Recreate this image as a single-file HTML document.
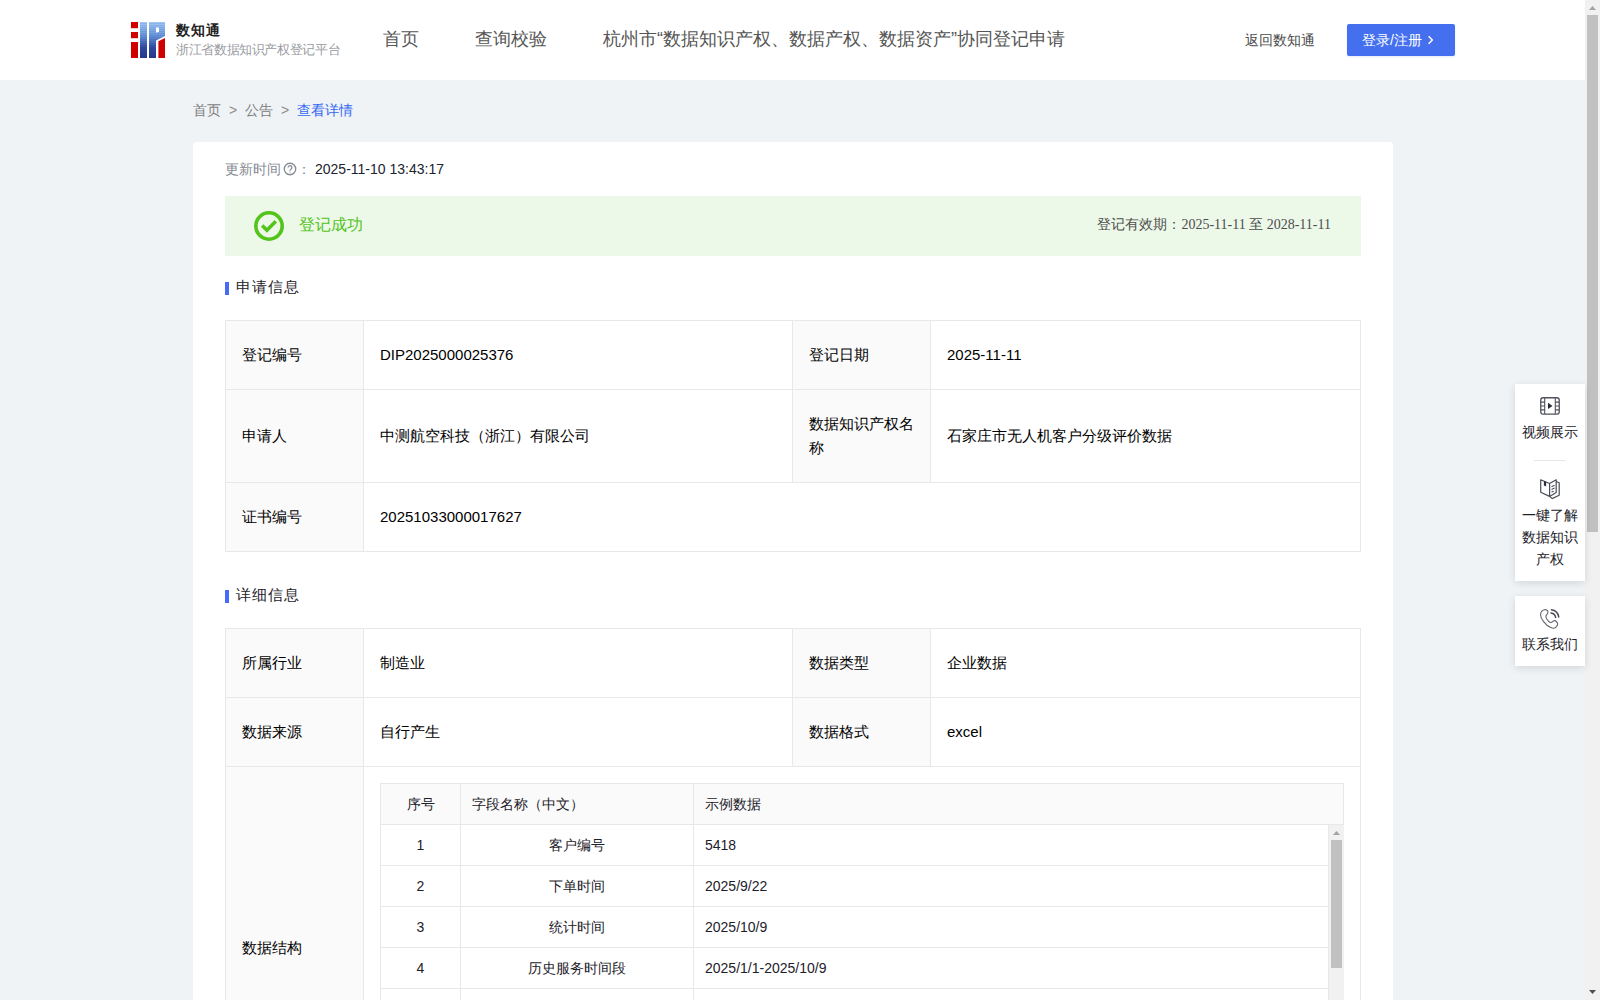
<!DOCTYPE html>
<html>
<head>
<meta charset="utf-8">
<title>数知通</title>
<style>
*{box-sizing:border-box;margin:0;padding:0}
html,body{width:1600px;height:1000px;overflow:hidden}
body{font-family:"Liberation Sans",sans-serif;font-size:14px;color:#222;background:#eff3f6;position:relative}
.serif{font-family:"Liberation Serif",serif}
#hdr{position:absolute;left:0;top:0;width:1585px;height:80px;background:#fff}
#logo{position:absolute;left:131px;top:22px;width:34px;height:36px}
#brand{position:absolute;left:176px;top:20px;font-size:14px;font-weight:bold;color:#222;line-height:20px;white-space:nowrap}
#brand2{position:absolute;left:176px;top:41px;font-size:12.6px;color:#999ba1;line-height:18px;white-space:nowrap}
.nav{position:absolute;top:26px;font-size:18px;line-height:26px;color:#555;white-space:nowrap}
#brand span{display:inline-block;width:15px}
#brand2 span{display:inline-block;width:12.65px}
#back{position:absolute;left:1245px;top:29px;font-size:14px;line-height:22px;color:#4a4a4a;white-space:nowrap}
#login{position:absolute;left:1347px;top:24px;width:108px;height:32px;background:#4470ef;border-radius:2px;box-shadow:0 1px 2px rgba(40,80,200,.12);color:#fff;font-size:14px;line-height:32px;white-space:nowrap;padding-left:15px}
#crumb{position:absolute;left:193px;top:99px;font-size:14px;line-height:22px;color:#808080;white-space:nowrap}
#crumb span{display:inline-block}
#crumb .sep{margin:0 8px;width:8px;color:#8c8c8c}
#crumb .cur{color:#3467f3}
#card{position:absolute;left:193px;top:142px;width:1200px;height:900px;background:#fff;border-radius:4px}
#upd{position:absolute;left:32px;top:16px;line-height:22px;color:#868a93;white-space:nowrap}
#upd .q{display:inline-block;width:14px;height:14px;vertical-align:-1.5px;margin:0 0 0 2px}
#upd b{margin-left:4px;font-weight:normal;color:#20232e}
#ok{position:absolute;left:32px;top:54px;width:1136px;height:60px;background:#ecf8e8}
#ok .ck{position:absolute;left:27px;top:13px;width:34px;height:34px}
#ok .t{position:absolute;left:74px;top:17px;font-size:16px;line-height:24px;color:#52c41a}
#ok .r{position:absolute;right:30px;top:18px;font-size:14px;line-height:22px;color:#4d4d4d;white-space:nowrap}
.sec{position:absolute;left:32px;font-size:15px;letter-spacing:1px;line-height:24px;color:#1d2129;white-space:nowrap;padding-left:11px}
.sec i{position:absolute;left:0;top:7px;width:4px;height:13px;background:#476bf6}
table{border-collapse:separate;border-spacing:0;table-layout:fixed}
.desc{position:absolute;left:32px;width:1136px;border:1px solid #e8e8e8}
.desc td{border:0 solid #e8e8e8;border-right-width:1px;border-bottom-width:1px;padding:22px 16px;line-height:24px;font-size:15px;color:#000;vertical-align:middle;text-align:left;background:#fff}
.desc td.l{background:#fafafa}
.desc td:last-child{border-right-width:0}
.desc tr:last-child>td{border-bottom-width:0}

.desc td.nest{padding:16px 16px 16px 16px;vertical-align:top}
.in{width:964px;border:1px solid #e8e8e8;border-collapse:separate;border-spacing:0;table-layout:fixed}
.in td,.in th{border:0 solid #e8e8e8;border-right-width:1px;border-bottom-width:1px;height:41px;padding:0 11px;font-size:14px;line-height:22px;color:#1d2129;font-weight:normal;background:#fff;text-align:left}
.in th{background:#fafafa}
.in td:last-child,.in th:last-child{border-right-width:0}
.in .c{text-align:center}
.vsb{position:absolute;background:#f1f1f1}
.vsb .th{position:absolute;left:2px;width:11px;background:#c1c1c1}
.vsb svg{position:absolute;left:4px;width:7px;height:4px}
.fbox{position:absolute;left:1515px;width:70px;background:#fff;box-shadow:0 2px 8px rgba(0,0,0,.12);text-align:center;font-size:14px;line-height:22px;color:#1d2129}
.fbox svg{position:absolute;left:25px}
.fbox .tx{position:absolute;left:0;width:70px;white-space:nowrap}
</style>
</head>
<body>
<div id="hdr">
  <svg id="logo" viewBox="0 0 34 36">
    <defs>
      <linearGradient id="lg" x1="0" y1="0" x2="0" y2="1"><stop offset="0" stop-color="#8fbaf0"/><stop offset=".35" stop-color="#5f8ed6"/><stop offset=".7" stop-color="#2f4a9e"/><stop offset="1" stop-color="#27378a"/></linearGradient>
      <pattern id="st" width="34" height="2" patternUnits="userSpaceOnUse"><rect width="34" height=".7" fill="#fff" fill-opacity=".28"/></pattern>
      <linearGradient id="fd" x1="0" y1="0" x2="0" y2="1"><stop offset="0" stop-color="#fff" stop-opacity="1"/><stop offset=".75" stop-color="#fff" stop-opacity="0"/></linearGradient>
      <mask id="mk"><rect width="34" height="36" fill="url(#fd)"/></mask>
    </defs>
    <rect x="0" y="0" width="7" height="6.2" fill="#d00000"/>
    <rect x="0" y="10" width="7" height="6.2" fill="#d00000"/>
    <rect x="0" y="20" width="7" height="16" fill="#d00000"/>
    <path id="bl" d="M9 0h7v36h-7zM18 0h16v14l-9 4.4v17.6h-7zM25 5.6v5.2l3-1.1v-4.1z" fill="url(#lg)" fill-rule="evenodd"/>
    <path d="M9 0h7v36h-7zM18 0h16v14l-9 4.4v17.6h-7zM25 5.6v5.2l3-1.1v-4.1z" fill="url(#st)" fill-rule="evenodd" mask="url(#mk)"/>
    <path d="M27.4 19.2l6.6-3.3v20.1h-6.6z" fill="#d00000"/>
  </svg>
  <div id="brand"><span>数</span><span>知</span><span>通</span></div>
  <div id="brand2"><span>浙</span><span>江</span><span>省</span><span>数</span><span>据</span><span>知</span><span>识</span><span>产</span><span>权</span><span>登</span><span>记</span><span>平</span><span>台</span></div>
  <div class="nav" style="left:383px">首页</div>
  <div class="nav" style="left:475px">查询校验</div>
  <div class="nav" style="left:603px">杭州市“数据知识产权、数据产权、数据资产”协同登记申请</div>
  <div id="back">返回数知通</div>
  <div id="login">登录/注册<svg viewBox="0 0 8 12" style="position:absolute;left:80px;top:10px;width:8px;height:12px"><path d="M1.6 2.3l3.7 3.7-3.7 3.7" fill="none" stroke="#fff" stroke-width="1.5"/></svg></div>
</div>
<div id="crumb"><span>首页</span><span class="sep">&gt;</span><span>公告</span><span class="sep">&gt;</span><span class="cur">查看详情</span></div>
<div id="card">
  <div id="upd">更新时间<svg class="q" viewBox="0 0 14 14"><circle cx="7" cy="7" r="5.75" fill="none" stroke="#868a93" stroke-width="1.3"/><path d="M5.1 5.6a1.9 1.9 0 1 1 2.9 1.6c-.7.4-1 .7-1 1.5" fill="none" stroke="#868a93" stroke-width="1.3"/><rect x="6.3" y="9.4" width="1.4" height="1.3" fill="#b5b7bc"/></svg>：<b>2025-11-10 13:43:17</b></div>
  <div id="ok"><svg class="ck" viewBox="0 0 34 34"><circle cx="17" cy="17" r="13.2" fill="none" stroke="#52c41a" stroke-width="3.6"/><path d="M10.2 16.6l4.7 4.7 8.9-9.1" fill="none" stroke="#52c41a" stroke-width="3.5"/></svg><div class="t">登记成功</div><div class="r serif">登记有效期：2025-11-11 至 2028-11-11</div></div>
  <div class="sec" style="top:133px"><i></i>申请信息</div>
  <table class="desc" style="top:178px">
    <colgroup><col style="width:138px"><col style="width:429px"><col style="width:138px"><col style="width:429px"></colgroup>
    <tr><td class="l">登记编号</td><td>DIP2025000025376</td><td class="l">登记日期</td><td>2025-11-11</td></tr>
    <tr><td class="l">申请人</td><td>中测航空科技（浙江）有限公司</td><td class="l">数据知识产权名称</td><td>石家庄市无人机客户分级评价数据</td></tr>
    <tr><td class="l">证书编号</td><td colspan="3">20251033000017627</td></tr>
  </table>
  <div class="sec" style="top:441px"><i></i>详细信息</div>
  <table class="desc" style="top:486px">
    <colgroup><col style="width:138px"><col style="width:429px"><col style="width:138px"><col style="width:429px"></colgroup>
    <tr><td class="l">所属行业</td><td>制造业</td><td class="l">数据类型</td><td>企业数据</td></tr>
    <tr><td class="l">数据来源</td><td>自行产生</td><td class="l">数据格式</td><td>excel</td></tr>
    <tr style="height:362px"><td class="l">数据结构</td><td colspan="3" class="nest">
      <table class="in">
        <colgroup><col style="width:80px"><col style="width:233px"><col style="width:649px"></colgroup>
        <tr><th class="c">序号</th><th>字段名称（中文）</th><th>示例数据</th></tr>
        <tr><td class="c">1</td><td class="c">客户编号</td><td>5418</td></tr>
        <tr><td class="c">2</td><td class="c">下单时间</td><td>2025/9/22</td></tr>
        <tr><td class="c">3</td><td class="c">统计时间</td><td>2025/10/9</td></tr>
        <tr><td class="c">4</td><td class="c">历史服务时间段</td><td>2025/1/1-2025/10/9</td></tr>
        <tr><td class="c">5</td><td class="c">服务次数</td><td>12</td></tr>
        <tr><td class="c">6</td><td class="c">累计消费金额</td><td>35600</td></tr>
      </table>
    </td></tr>
  </table>
</div>
<div class="vsb" style="left:1328px;top:825px;width:16px;height:175px;border-left:1px solid #e8e8e8"><svg viewBox="0 0 7 4" style="top:6px"><path d="M0 4L3.5 0 7 4z" fill="#a3a3a3"/></svg><div class="th" style="top:15px;height:128px"></div></div>
<div class="vsb" style="left:1585px;top:0;width:15px;height:1000px"><svg viewBox="0 0 7 4" style="top:6px"><path d="M0 4L3.5 0 7 4z" fill="#a3a3a3"/></svg><div class="th" style="top:15px;height:517px"></div><svg viewBox="0 0 7 4" style="top:990px"><path d="M0 0L3.5 4 7 0z" fill="#505050"/></svg></div>
<div class="fbox" style="top:384px;height:197px">
  <svg viewBox="0 0 20 18" style="top:13px;width:20px;height:18px"><rect x=".75" y=".75" width="18.5" height="16.3" rx="2.4" fill="none" stroke="#50535d" stroke-width="1.3"/><path d="M4.7 1v16M15.3 1v16M1 5.1h3.7M1 9h3.7M1 12.900h3.7M15.3 5.1H19M15.3 9H19M15.3 12.900H19" fill="none" stroke="#50535d" stroke-width="1.1"/><path d="M8 5.700l4.500 3.200-4.500 3.200z" fill="#2a2d38"/></svg>
  <div class="tx" style="top:37px">视频展示</div>
  <div style="position:absolute;left:19px;top:76px;width:32px;height:1px;background:#e5e6eb"></div>
  <svg viewBox="0 0 20 20" style="top:94.500px;width:20px;height:20px"><path d="M.7 .8l8.900 3.700v12.900l-8.900-4.200zM9.600 4.500l6.600-3.700v12.800l-6.600 3.800M16.200 2.500l3 1.200v12.500l-7 3.400-2.600-2.200" fill="none" stroke="#4a4d58" stroke-width="1.2" stroke-linejoin="round"/><path d="M3.900 2.100l2.200.9v4.700l-1.100-1-1.100.1z" fill="#2a2d38"/><path d="M11.500 7.700l3.100-1.400M11.500 10.400l3.100-1.400M11.500 13.100l2.100-.95" stroke="#4a4d58" stroke-width="1.100" fill="none"/></svg>
  <div class="tx" style="top:120px">一键了解</div>
  <div class="tx" style="top:142px">数据知识</div>
  <div class="tx" style="top:164px">产权</div>
</div>
<div class="fbox" style="top:596px;height:70px">
  <svg viewBox="0 0 20 20" style="top:12.500px;width:20px;height:20px"><path d="M4.400 .7C6 .3 7.600 1.200 7.900 2.600 8.200 4.200 7.200 5.200 6.400 6.200 5.600 7.200 5.800 8.400 6.800 10 7.800 11.600 8.800 12.800 10 13.300 11.200 13.800 12 13.200 12.900 12.400 14 11.500 15.600 11.600 16.700 12.900 17.900 14.300 17.600 16.600 16 18.100 14.600 19.400 12.600 19.400 10.800 18.600 8 17.400 5.400 15.200 3.400 12.400 1.600 9.900 .4 7.400 .6 5.200 .8 3 2.400 1.200 4.400 .7z" fill="none" stroke="#62656e" stroke-width="1.100"/><path d="M11 3.900A5.300 5.300 0 0 1 15.600 8.400M11.400 .8A8.500 8.500 0 0 1 18.700 7.900" fill="none" stroke="#4a4d58" stroke-width="1.500" stroke-linecap="round"/></svg>
  <div class="tx" style="top:37px">联系我们</div>
</div>

</body>
</html>
